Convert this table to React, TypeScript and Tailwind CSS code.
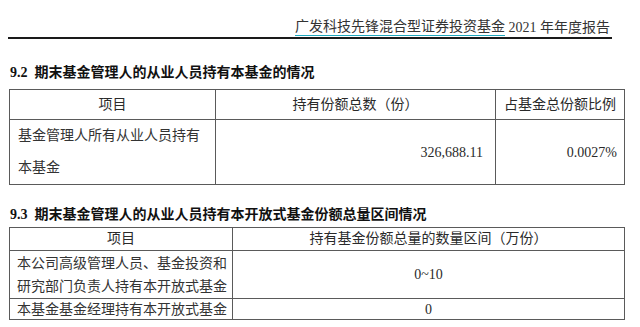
export default function App() {
  const font = "font-['Liberation_Serif','Noto_Sans_CJK_SC',serif]";
  const cell = "border border-[#5a5a5a] p-0";

  return (
    <div className={`w-[640px] h-[327px] bg-white overflow-hidden text-[#2a2a2a] ${font}`}>
      {/* running header */}
      <div className="pt-[20px] pl-[8px]">
        <div className="w-[604px] border-b-2 border-[#1a1a1a] flex justify-end items-end pr-[2px] pb-[1px]">
          <span className="inline-block text-[14px] leading-[14px] pb-[1px] text-[#333] border-b border-[#1fa8bd]">
            广发科技先锋混合型证券投资基金
          </span>
          <span className="text-[14px] leading-[16px] text-[#333] whitespace-pre">{" 2021 年年度报告"}</span>
        </div>
      </div>

      {/* 9.2 */}
      <h2 className="mt-[24px] pl-[10px] text-[14px] leading-[20px] font-bold text-[#111]">
        9.2&nbsp;&nbsp;期末基金管理人的从业人员持有本基金的情况
      </h2>
      <table className="mt-[6px] ml-[9px] w-[615px] border-collapse table-fixed text-[14px]">
        <colgroup>
          <col className="w-[206px]" />
          <col className="w-[280px]" />
          <col className="w-[129px]" />
        </colgroup>
        <tbody>
          <tr className="h-[30px]">
            <td className={`${cell} text-center`}>项目</td>
            <td className={`${cell} text-center`}>持有份额总数（份）</td>
            <td className={`${cell} text-center`}>占基金总份额比例</td>
          </tr>
          <tr className="h-[63px]">
            <td className={`${cell} pl-[8px] leading-[32px] text-[#333]`}>
              基金管理人所有从业人员持有
              <br />
              本基金
            </td>
            <td className={`${cell} text-right pr-[12px]`}>326,688.11</td>
            <td className={`${cell} text-right pr-[7px]`}>0.0027%</td>
          </tr>
        </tbody>
      </table>

      {/* 9.3 */}
      <h2 className="mt-[20px] pl-[10px] text-[14px] leading-[20px] font-bold text-[#111]">
        9.3&nbsp;&nbsp;期末基金管理人的从业人员持有本开放式基金份额总量区间情况
      </h2>
      <table className="mt-[2px] ml-[9px] w-[615px] border-collapse table-fixed text-[14px]">
        <colgroup>
          <col className="w-[223px]" />
          <col className="w-[392px]" />
        </colgroup>
        <tbody>
          <tr className="h-[23px]">
            <td className={`${cell} text-center leading-[20px]`}>项目</td>
            <td className={`${cell} text-center leading-[20px]`}>持有基金份额总量的数量区间（万份）</td>
          </tr>
          <tr className="h-[48px]">
            <td className={`${cell} pl-[7px] leading-[23px] text-[#333] whitespace-nowrap`}>
              本公司高级管理人员、基金投资和
              <br />
              研究部门负责人持有本开放式基金
            </td>
            <td className={`${cell} text-center`}>0~10</td>
          </tr>
          <tr className="h-[21px]">
            <td className={`${cell} pl-[7px] leading-[19px] text-[#333] whitespace-nowrap`}>本基金基金经理持有本开放式基金</td>
            <td className={`${cell} text-center leading-[19px]`}>0</td>
          </tr>
        </tbody>
      </table>
    </div>
  );
}
